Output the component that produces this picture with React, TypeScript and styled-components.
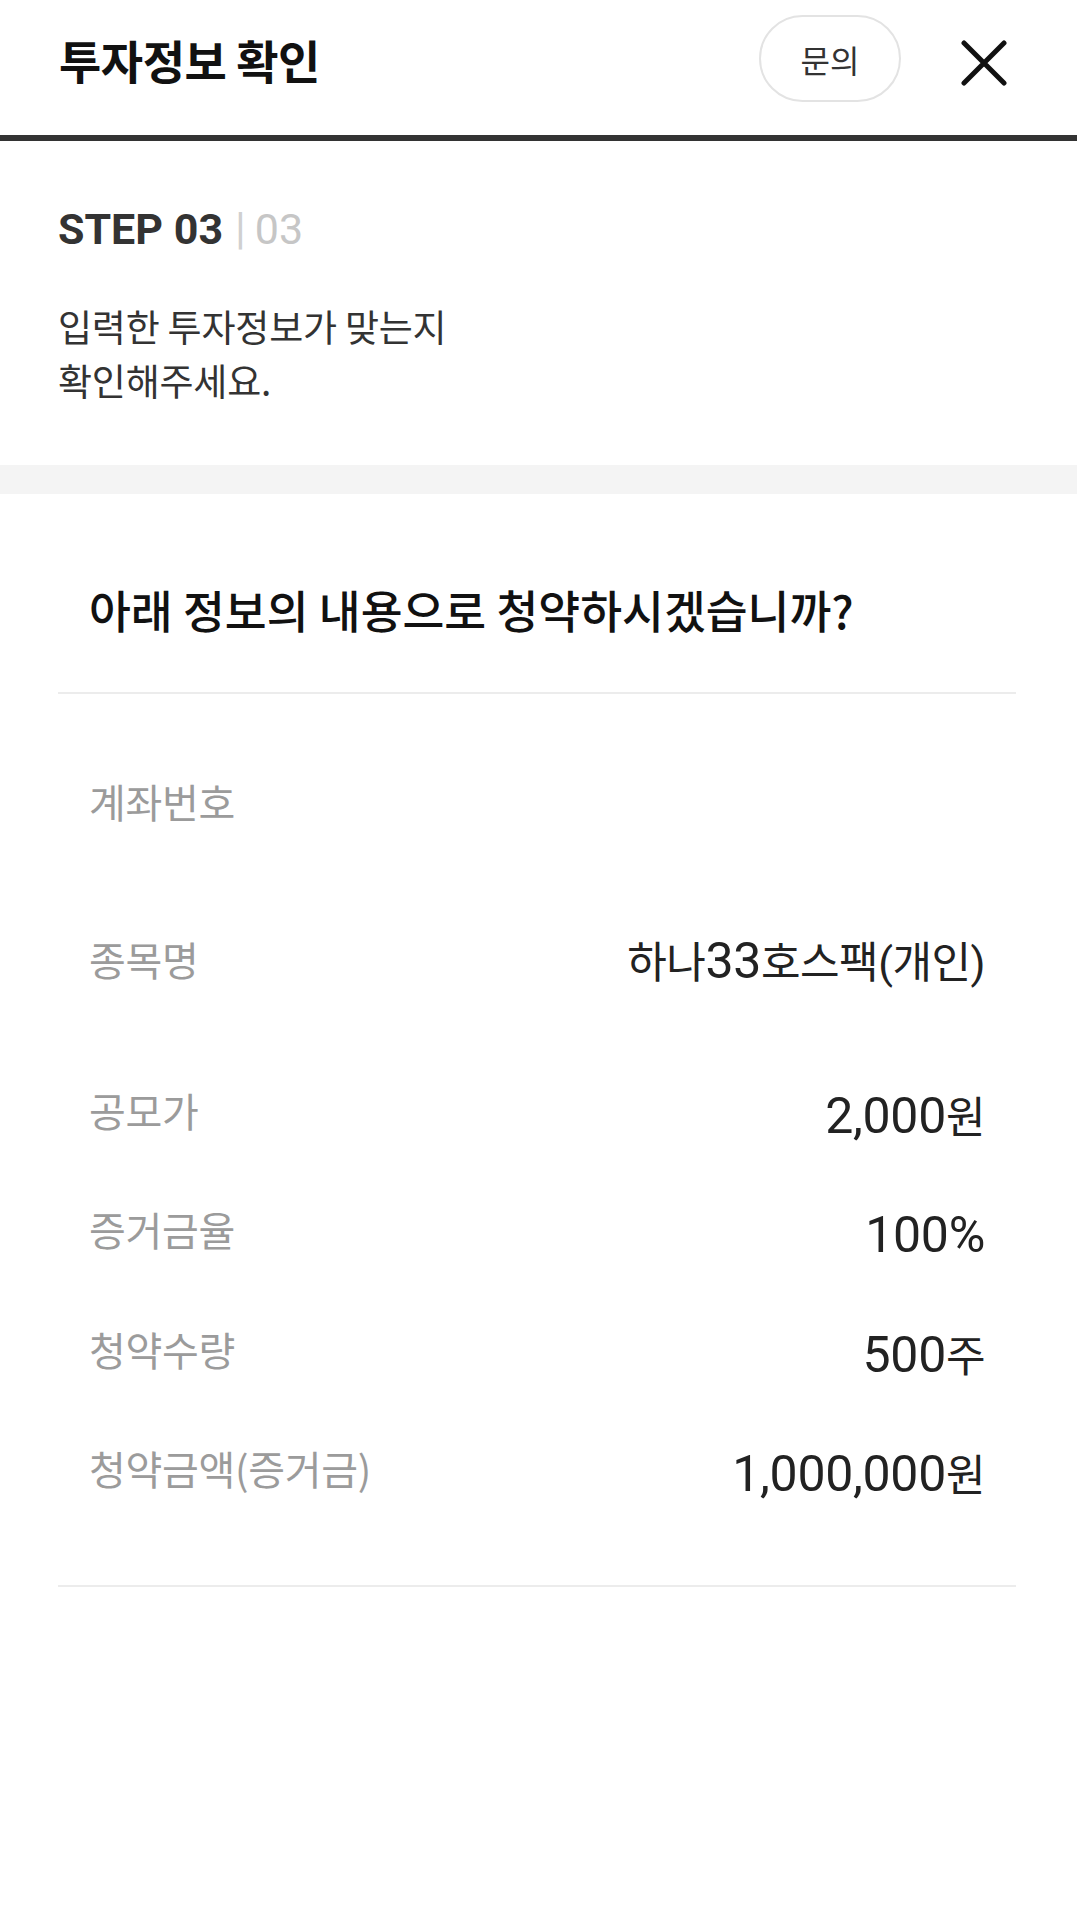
import React from "react";
import styled, { createGlobalStyle } from "styled-components";

const GlobalStyle = createGlobalStyle`
  html, body {
    margin: 0;
    padding: 0;
    background: #ffffff;
  }
  body {
    font-family: "Noto Sans CJK KR", "Noto Sans", sans-serif;
    color: #222;
    -webkit-font-smoothing: antialiased;
  }
  * { box-sizing: border-box; }
`;

const Page = styled.div`
  width: 100%;
  min-height: 1916px;
  background: #fff;
`;

const Header = styled.header`
  display: flex;
  align-items: center;
  height: 141px;
  padding: 0 70px 18px 59px;
  border-bottom: 6px solid #333;
`;

const Title = styled.h1`
  flex: 1;
  margin: 0;
  font-family: "Noto Sans CJK KR", sans-serif;
  font-size: 46px;
  font-weight: 700;
  line-height: 56px;
  color: #111;
  letter-spacing: -0.5px;
`;

const InquiryButton = styled.button`
  width: 142px;
  height: 87px;
  border: 2px solid #e3e3e3;
  border-radius: 44px;
  background: #fff;
  font-family: "Noto Sans CJK KR", sans-serif;
  font-size: 32px;
  font-weight: 400;
  color: #333;
  padding: 0;
  cursor: pointer;
`;

const CloseButton = styled.button`
  display: flex;
  align-items: center;
  justify-content: center;
  width: 46px;
  height: 46px;
  margin-left: 60px;
  margin-top: 8px;
  padding: 0;
  border: none;
  background: none;
  cursor: pointer;
`;

const StepSection = styled.section`
  padding: 63px 58px 58px 58px;
`;

const StepLabel = styled.div`
  display: flex;
  align-items: baseline;
  height: 50px;
  font-family: Roboto, "Noto Sans", sans-serif;
  font-size: 43px;
  line-height: 50px;
`;

const StepCurrent = styled.span`
  font-weight: 700;
  color: #333;
`;

const StepDivider = styled.span`
  margin: 0 9px 0 12px;
  font-weight: 400;
  color: #d0d0d0;
  font-size: 44px;
`;

const StepTotal = styled.span`
  font-weight: 400;
  color: #c6c6c6;
`;

const Guide = styled.p`
  margin: 45px 0 0;
  font-family: "Noto Sans CJK KR", sans-serif;
  font-size: 37px;
  line-height: 54px;
  font-weight: 400;
  color: #333;
  letter-spacing: -0.2px;
`;

const Band = styled.div`
  height: 29px;
  background: #f4f4f4;
`;

const Card = styled.section`
  padding: 87px 61px 0 58px;
`;

const Question = styled.h2`
  margin: 0;
  padding: 0 31px;
  font-family: "Noto Sans CJK KR", sans-serif;
  font-size: 45.5px;
  font-weight: 500;
  line-height: 56px;
  color: #111;
`;

const Divider = styled.hr<{ $top?: number }>`
  margin: ${(p) => p.$top ?? 0}px 0 0;
  height: 2px;
  border: none;
  background: #ececec;
`;

const InfoList = styled.dl`
  display: flex;
  flex-direction: column;
  gap: 71px;
  margin: 0;
  padding: 83px 31px 93px;
`;

const Row = styled.div<{ $extra?: number }>`
  display: flex;
  justify-content: space-between;
  align-items: flex-start;
  height: 48px;
  margin-bottom: ${(p) => p.$extra ?? 0}px;
`;

const Label = styled.dt`
  font-family: "Noto Sans CJK KR", sans-serif;
  font-size: 40px;
  line-height: 48px;
  color: #9b9b9b;
  letter-spacing: -0.3px;
  white-space: nowrap;
`;

const Value = styled.dd<{ $shift?: number }>`
  margin: ${(p) => p.$shift ?? 6}px 0 0;
  font-family: Roboto, "Noto Sans CJK KR", sans-serif;
  font-size: 43px;
  line-height: 48px;
  color: #222;
  text-align: right;
  letter-spacing: -0.5px;
  white-space: nowrap;
`;

const Num = styled.span`
  font-family: Roboto, sans-serif;
  font-size: 50px;
  letter-spacing: -0.3px;
`;

const CloseIcon = () => (
  <svg width="46" height="46" viewBox="0 0 46 46" fill="none">
    <path
      d="M3 3 L43 43 M43 3 L3 43"
      stroke="#111"
      strokeWidth="5"
      strokeLinecap="round"
    />
  </svg>
);

const renderValue = (v: string) =>
  v
    .split(/([0-9][0-9,%]*)/)
    .filter((s) => s.length > 0)
    .map((part, i) =>
      /^[0-9]/.test(part) ? (
        <Num key={i}>{part}</Num>
      ) : (
        <React.Fragment key={i}>{part}</React.Fragment>
      )
    );

const rows: { label: string; value: string; extra?: number; shift?: number }[] = [
  { label: "계좌번호", value: "", extra: 39 },
  { label: "종목명", value: "하나33호스팩(개인)", extra: 32, shift: 2 },
  { label: "공모가", value: "2,000원" },
  { label: "증거금율", value: "100%", extra: 1 },
  { label: "청약수량", value: "500주" },
  { label: "청약금액(증거금)", value: "1,000,000원" },
];

export default function App() {
  return (
    <>
      <GlobalStyle />
      <Page>
        <Header>
          <Title>투자정보 확인</Title>
          <InquiryButton type="button">문의</InquiryButton>
          <CloseButton type="button" aria-label="닫기">
            <CloseIcon />
          </CloseButton>
        </Header>
        <StepSection>
          <StepLabel>
            <StepCurrent>STEP 03</StepCurrent>
            <StepDivider>|</StepDivider>
            <StepTotal>03</StepTotal>
          </StepLabel>
          <Guide>
            입력한 투자정보가 맞는지
            <br />
            확인해주세요.
          </Guide>
        </StepSection>
        <Band />
        <Card>
          <Question>아래 정보의 내용으로 청약하시겠습니까?</Question>
          <Divider $top={55} />
          <InfoList>
            {rows.map((r) => (
              <Row key={r.label} $extra={r.extra}>
                <Label>{r.label}</Label>
                <Value $shift={r.shift}>{renderValue(r.value)}</Value>
              </Row>
            ))}
          </InfoList>
          <Divider />
        </Card>
      </Page>
    </>
  );
}
